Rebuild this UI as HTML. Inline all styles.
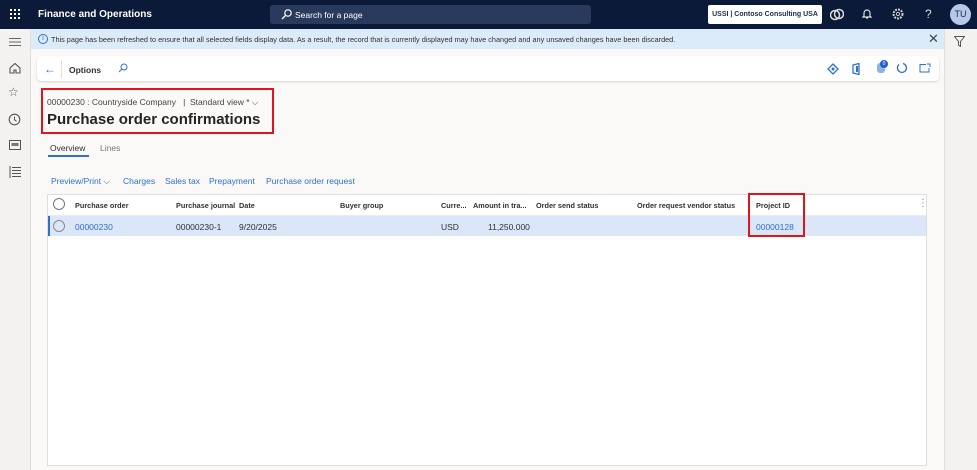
<!DOCTYPE html>
<html><head><style>
*{box-sizing:border-box;margin:0;padding:0}
body{width:977px;height:470px;overflow:hidden;background:#faf9f8;font-family:"Liberation Sans",sans-serif;position:relative;color:#323130}
.a{position:absolute}
.top{left:0;top:0;width:977px;height:29px;background:#0b1a38}
.t{font-size:9px;white-space:nowrap}
.lnk{color:#2f6fd1}
.hd{font-size:7.3px;color:#323130;font-weight:bold;white-space:nowrap}
</style></head><body>
<div class="a top"></div>
<svg class="a" style="left:10px;top:9px" width="11" height="11"><g fill="#fff"><rect x="0" y="0" width="2" height="2"/><rect x="4" y="0" width="2" height="2"/><rect x="8" y="0" width="2" height="2"/><rect x="0" y="4" width="2" height="2"/><rect x="4" y="4" width="2" height="2"/><rect x="8" y="4" width="2" height="2"/><rect x="0" y="8" width="2" height="2"/><rect x="4" y="8" width="2" height="2"/><rect x="8" y="8" width="2" height="2"/></g></svg>
<div class="a t" style="left:38px;top:9px;color:#fff;font-size:10px;font-weight:bold">Finance and Operations</div>
<div class="a" style="left:270px;top:5px;width:321px;height:19px;background:#2a3a5c;border-radius:3px"></div>
<svg class="a" style="left:281px;top:9px" width="11" height="11"><circle cx="7" cy="4" r="3.2" fill="none" stroke="#fff" stroke-width="1.2"/><line x1="4.5" y1="6.5" x2="1" y2="10" stroke="#fff" stroke-width="1.3"/></svg>
<div class="a t" style="left:295px;top:10px;color:#fff;font-size:8.5px">Search for a page</div>
<div class="a t" style="left:708px;top:5px;width:114px;height:19px;background:#fff;border-radius:2px;font-size:7px;font-weight:bold;color:#1b2a4a;text-align:center;line-height:19px">USSI | Contoso Consulting USA</div>
<svg class="a" style="left:830px;top:8px" width="14" height="13"><circle cx="5" cy="7" r="4.5" fill="none" stroke="#ddd" stroke-width="1.5"/><circle cx="9" cy="6" r="4.5" fill="none" stroke="#ddd" stroke-width="1.5"/></svg>
<svg class="a" style="left:862px;top:8px" width="10" height="12"><path d="M2 8V5a3 3 0 0 1 6 0v3l1 1H1z M4 10h2" fill="none" stroke="#ddd" stroke-width="1.2"/></svg>
<svg class="a" style="left:892px;top:8px" width="12" height="12"><circle cx="6" cy="6" r="4.5" fill="none" stroke="#ccc" stroke-width="2" stroke-dasharray="2 1"/><circle cx="6" cy="6" r="1.6" fill="none" stroke="#ccc"/></svg>
<div class="a t" style="left:925px;top:7px;color:#ddd;font-size:12px">?</div>
<div class="a" style="left:950px;top:4px;width:21px;height:21px;border-radius:50%;background:#b7c9ea;color:#1b2a4a;font-size:9px;text-align:center;line-height:21px">TU</div>
<div class="a" style="left:0;top:29px;width:31px;height:441px;background:#f3f2f1;border-right:1px solid #e1dfdd"></div>
<svg class="a" style="left:9px;top:37px" width="12" height="10"><g stroke="#666" stroke-width="1"><line x1="0" y1="1.5" x2="12" y2="1.5"/><line x1="0" y1="5" x2="12" y2="5"/><line x1="0" y1="8.5" x2="12" y2="8.5"/></g></svg>
<svg class="a" style="left:9px;top:62px" width="12" height="12"><path d="M1 6L6 1.5 11 6V11H7V8H5V11H1z" fill="none" stroke="#555" stroke-width="1.1"/></svg>
<div class="a t" style="left:8px;top:85px;font-size:12px;color:#555">☆</div>
<svg class="a" style="left:8px;top:113px" width="13" height="13"><circle cx="6.5" cy="6.5" r="5.3" fill="none" stroke="#555" stroke-width="1.1"/><path d="M6.5 3.5v3.3l2 1.5" fill="none" stroke="#555"/></svg>
<svg class="a" style="left:9px;top:140px" width="12" height="10"><rect x="0.5" y="0.5" width="11" height="9" fill="none" stroke="#555"/><rect x="2.5" y="3" width="7" height="3" fill="#777"/></svg>
<svg class="a" style="left:9px;top:166px" width="12" height="12"><g stroke="#555"><line x1="1" y1="0" x2="1" y2="12"/><line x1="3" y1="1.5" x2="12" y2="1.5"/><line x1="3" y1="4.5" x2="12" y2="4.5"/><line x1="3" y1="7.5" x2="12" y2="7.5"/><line x1="3" y1="10.5" x2="12" y2="10.5"/></g></svg>
<div class="a" style="left:944px;top:29px;width:33px;height:441px;background:#f3f2f1;border-left:1px solid #e1dfdd"></div>
<svg class="a" style="left:954px;top:36px" width="11" height="11"><path d="M0.5 0.5h10L6.5 5.5v5l-2-1.5V5.5z" fill="none" stroke="#555"/></svg>
<div class="a" style="left:31px;top:29px;width:913px;height:20px;background:#dcebfa"></div>
<div class="a" style="left:38px;top:34px;width:10px;height:10px;border:1px solid #2f6fd1;border-radius:50%;font-size:7px;color:#2f6fd1;text-align:center;line-height:8px">i</div>
<div class="a t" style="left:51px;top:35px;font-size:7.3px;color:#323130">This page has been refreshed to ensure that all selected fields display data. As a result, the record that is currently displayed may have changed and any unsaved changes have been discarded.</div>
<div class="a t" style="left:928px;top:31px;font-size:13px;color:#444">✕</div>
<div class="a" style="left:37px;top:56px;width:902px;height:25px;background:#fff;border-radius:4px;box-shadow:0 1px 2px rgba(0,0,0,.15)"></div>
<div class="a t" style="left:44px;top:62px;font-size:12px;color:#2f6fd1">←</div>
<div class="a" style="left:61px;top:60px;width:1px;height:18px;background:#e1dfdd"></div>
<div class="a t" style="left:69px;top:65px;font-size:8.5px;font-weight:bold">Options</div>
<svg class="a" style="left:118px;top:63px" width="10" height="10"><circle cx="6" cy="4" r="3" fill="none" stroke="#2f6fd1"/><line x1="4" y1="6" x2="1" y2="9" stroke="#2f6fd1"/></svg>
<svg class="a" style="left:827px;top:63px" width="12" height="12"><path d="M6 1L11 6 6 11 1 6z" fill="none" stroke="#2f6fd1" stroke-width="1.3"/><circle cx="6" cy="6" r="1.5" fill="#2f6fd1"/></svg>
<svg class="a" style="left:852px;top:63px" width="9" height="12"><path d="M1 2l6-1.5v11L1 10z" fill="none" stroke="#2f6fd1" stroke-width="1.3"/><rect x="4" y="3" width="2" height="6" fill="#2f6fd1"/></svg>
<div class="a" style="left:877px;top:63px;width:8px;height:10px;background:#8fb2e8;border-radius:3px"></div>
<div class="a" style="left:880px;top:60px;width:8px;height:8px;background:#1f5fcf;border-radius:50%;color:#fff;font-size:5px;text-align:center;line-height:8px">0</div>
<svg class="a" style="left:896px;top:62px" width="12" height="12"><path d="M3 2.5A4.5 4.5 0 1 0 7 1.5" fill="none" stroke="#2f6fd1" stroke-width="1.3"/></svg>
<svg class="a" style="left:919px;top:63px" width="12" height="10"><path d="M7 1.5H1v7.5h9V5 M8 1h3v3" fill="none" stroke="#2f6fd1"/></svg>
<div class="a" style="left:41px;top:88px;width:233px;height:46px;border:2px solid #e0151b"></div>
<div class="a t" style="left:47px;top:97px;font-size:8.5px;color:#444">00000230 : Countryside Company &nbsp;&nbsp;| &nbsp;Standard view * ⌵</div>
<div class="a t" style="left:47px;top:111px;font-size:15px;font-weight:bold;color:#252423">Purchase order confirmations</div>
<div class="a t" style="left:50px;top:143px;font-size:8.5px;color:#323130">Overview</div>
<div class="a" style="left:48px;top:155px;width:41px;height:2px;background:#2f6fd1"></div>
<div class="a t" style="left:100px;top:143px;font-size:8.5px;color:#777">Lines</div>
<div class="a t lnk" style="left:51px;top:176px;font-size:8.5px">Preview/Print <span style="color:#555">⌵</span></div>
<div class="a t lnk" style="left:123px;top:176px;font-size:8.5px">Charges</div>
<div class="a t lnk" style="left:165px;top:176px;font-size:8.5px">Sales tax</div>
<div class="a t lnk" style="left:209px;top:176px;font-size:8.5px">Prepayment</div>
<div class="a t lnk" style="left:266px;top:176px;font-size:8.5px">Purchase order request</div>
<div class="a" style="left:47px;top:194px;width:880px;height:272px;background:#fff;border:1px solid #e1dfdd"></div>
<div class="a" style="left:48px;top:215px;width:878px;height:1px;background:#edebe9"></div>
<div class="a" style="left:48px;top:216px;width:878px;height:20px;background:#dbe6f9"></div>
<div class="a" style="left:48px;top:216px;width:2px;height:20px;background:#2f6fd1"></div>
<div class="a" style="left:53px;top:198px;width:12px;height:12px;border:1px solid #777;border-radius:50%"></div>
<div class="a" style="left:53px;top:220px;width:12px;height:12px;border:1px solid #888;border-radius:50%"></div>
<div class="a hd" style="left:75px;top:201px">Purchase order</div>
<div class="a hd" style="left:176px;top:201px">Purchase journal</div>
<div class="a hd" style="left:239px;top:201px">Date</div>
<div class="a hd" style="left:340px;top:201px">Buyer group</div>
<div class="a hd" style="left:441px;top:201px">Curre...</div>
<div class="a hd" style="left:473px;top:201px">Amount in tra...</div>
<div class="a hd" style="left:536px;top:201px">Order send status</div>
<div class="a hd" style="left:637px;top:201px">Order request vendor status</div>
<div class="a hd" style="left:756px;top:201px">Project ID</div>
<div class="a t" style="left:918px;top:198px;color:#777;font-size:10px">⋮</div>
<div class="a t lnk" style="left:75px;top:222px;font-size:8.5px">00000230</div>
<div class="a t" style="left:176px;top:222px;font-size:8.5px">00000230-1</div>
<div class="a t" style="left:239px;top:222px;font-size:8.5px">9/20/2025</div>
<div class="a t" style="left:441px;top:222px;font-size:8.5px">USD</div>
<div class="a t" style="left:488px;top:222px;font-size:8.5px">11,250.000</div>
<div class="a t lnk" style="left:756px;top:222px;font-size:8.5px">00000128</div>
<div class="a" style="left:748px;top:193px;width:57px;height:44px;border:2px solid #e0151b"></div>
</body></html>
